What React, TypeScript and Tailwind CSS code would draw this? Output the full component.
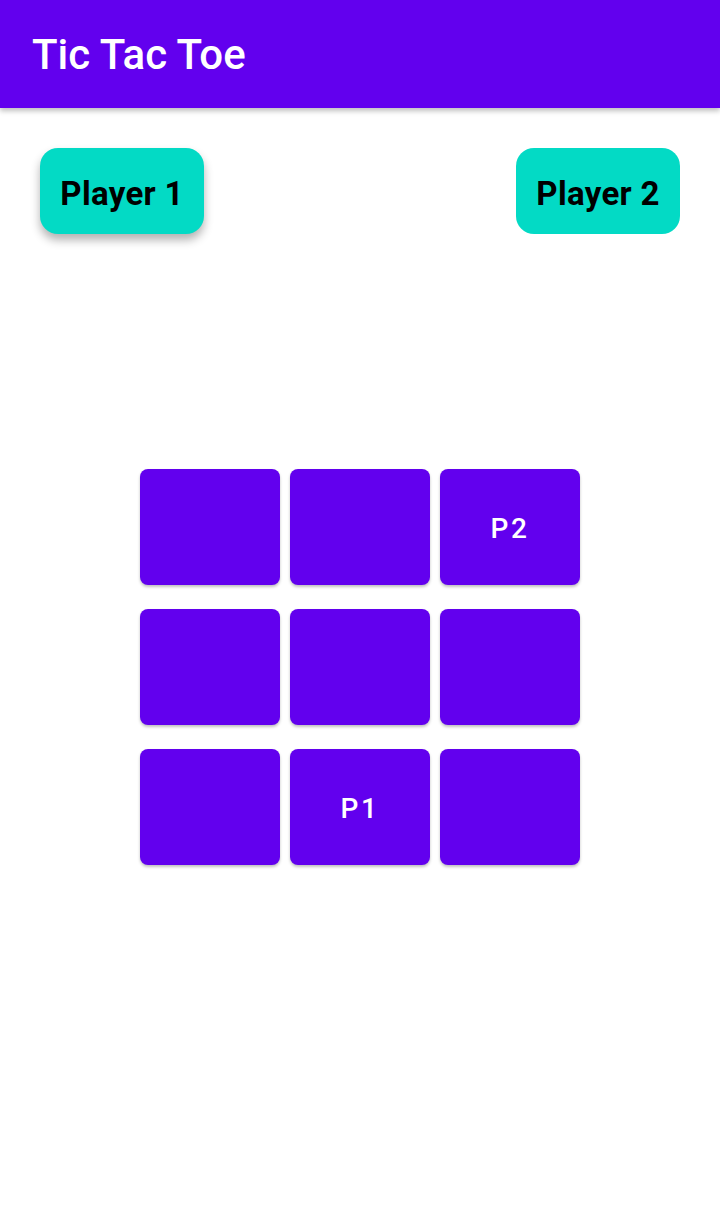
import React from "react";

const cells = ["", "", "P2", "", "", "", "", "P1", ""];

export default function App() {
  return (
    <div className="w-[720px] h-[1226px] bg-white flex flex-col font-['Roboto',sans-serif]">
      <div className="h-[108px] shrink-0 bg-[#6200EE] flex items-center pl-[32px] shadow-[0_3px_5px_rgba(0,0,0,0.25)] relative z-10">
        <span className="text-white text-[42px] font-medium leading-none pt-[2px]">Tic Tac Toe</span>
      </div>
      <div className="flex justify-between px-[40px] pt-[40px]">
        <div className="w-[164px] h-[86px] rounded-[18px] bg-[#03DAC5] flex items-center justify-center shadow-[0_6px_10px_rgba(0,0,0,0.3)]">
          <span className="text-black text-[33px] font-bold leading-none tracking-[0.3px] pt-[4px]">Player 1</span>
        </div>
        <div className="w-[164px] h-[86px] rounded-[18px] bg-[#03DAC5] flex items-center justify-center">
          <span className="text-black text-[33px] font-bold leading-none tracking-[0.3px] pt-[4px]">Player 2</span>
        </div>
      </div>
      <div className="mt-[235px] mx-auto grid grid-cols-[140px_140px_140px] gap-x-[10px] gap-y-[24px]">
        {cells.map((c, i) => (
          <div
            key={i}
            className="w-[140px] h-[116px] rounded-[8px] bg-[#6200EE] flex items-center justify-center shadow-[0_2px_3px_rgba(0,0,0,0.25)]"
          >
            <span className="text-white text-[28px] font-medium leading-none tracking-[2.5px] pt-[3px]">{c}</span>
          </div>
        ))}
      </div>
    </div>
  );
}
